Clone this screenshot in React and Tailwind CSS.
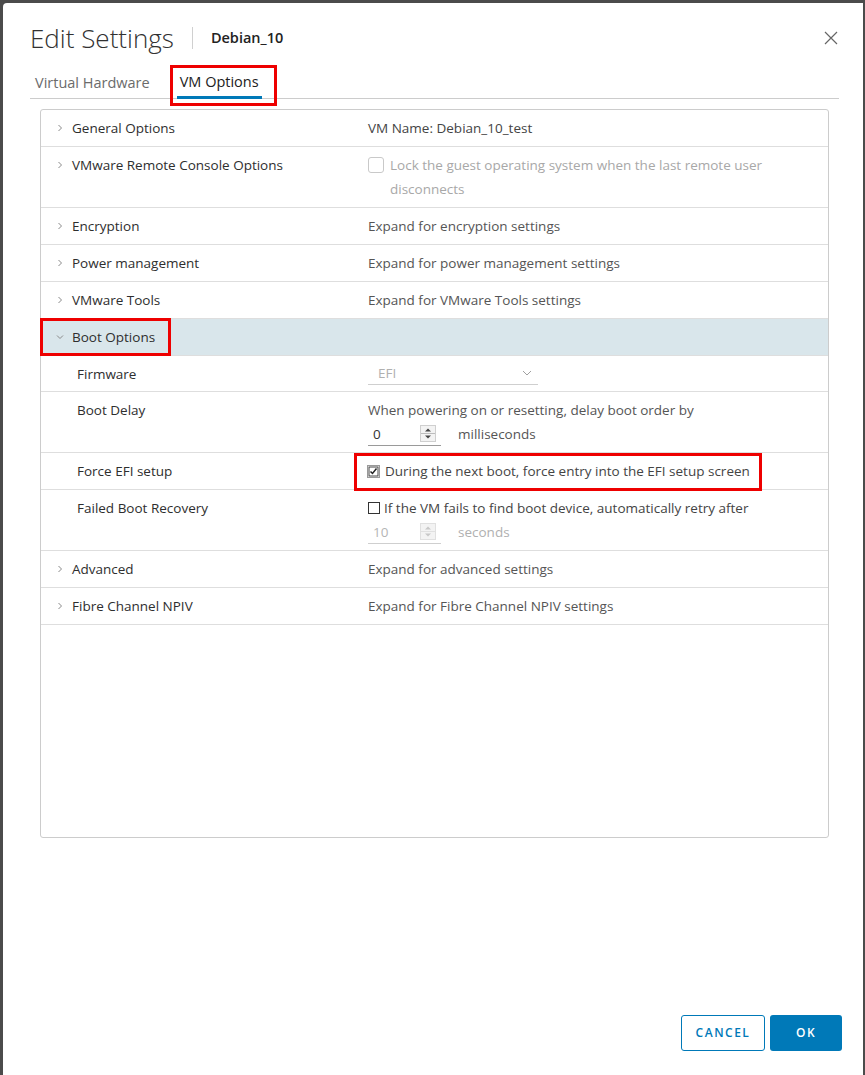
import React from 'react';

const font = { fontFamily: '"Open Sans", Lato, "Liberation Sans", sans-serif' };

function Chevron({ open }) {
  return (
    <svg width="8" height="8" viewBox="0 0 8 8" className="shrink-0">
      {open ? (
        <path d="M1 2.5 L4 5.5 L7 2.5" fill="none" stroke="#8a8a8a" strokeWidth="1" />
      ) : (
        <path d="M2.5 1 L5.5 4 L2.5 7" fill="none" stroke="#8a8a8a" strokeWidth="1" />
      )}
    </svg>
  );
}

function Spinner({ value, disabled }) {
  const c = disabled ? '#c8c8c8' : '#444';
  return (
    <div className={`flex items-center w-[73px] h-[24px] border-b ${disabled ? 'border-[#cfcfcf]' : 'border-[#9a9a9a]'}`}>
      <span className={`pl-[5px] flex-1 ${disabled ? 'text-[#b5b5b5]' : 'text-[#333]'}`}>{value}</span>
      <svg width="16" height="17" viewBox="0 0 16 17" className="mr-[5px]">
        <rect x="0.5" y="0.5" width="15" height="16" fill="#f3f3f3" stroke={disabled ? '#e0e0e0' : '#cfcfcf'} />
        <line x1="1" y1="8.5" x2="15" y2="8.5" stroke={disabled ? '#e0e0e0' : '#bcbcbc'} />
        <path d="M5 6.5 L8 3.5 L11 6.5 Z" fill={c} />
        <path d="M5 10.5 L8 13.5 L11 10.5 Z" fill={c} />
      </svg>
    </div>
  );
}

function Row({ label, chevron, open, sub, children, highlight, h, redLabel, redValue }) {
  return (
    <div className={`relative flex border-b border-[#dedede] ${highlight ? 'bg-[#d9e6eb]' : ''} ${h || ''}`}>
      <div className={`w-[327px] shrink-0 flex items-start py-[6px] leading-[24px] ${sub ? 'pl-[36px]' : 'pl-[15px]'}`}>
        {chevron && (
          <span className="h-[24px] flex items-center w-[16px]">
            <Chevron open={open} />
          </span>
        )}
        <span className="text-[#2e2e2e] font-medium">{label}</span>
      </div>
      <div className="relative flex-1 py-[6px] leading-[24px] text-[#555]">
        {children}
        {redValue && <span className="absolute left-[-14px] top-0 w-[408px] h-[38px] border-[3px] border-[#ee0000]" />}
      </div>
      {redLabel && <span className="absolute left-[-1px] top-[-1px] w-[131px] h-[38px] border-[3px] border-[#ee0000]" />}
    </div>
  );
}

export default function App() {
  return (
    <div className="w-[865px] h-[1075px] bg-[#4b4b4b] pl-[3px] pt-[3px] pr-[2px] overflow-hidden" style={font}>
      <div className="bg-white h-full rounded-tl-[4px] flex flex-col text-[13.5px]">
        <div className="flex items-center pl-[27px] pr-[25px] pt-[19px] h-[51px]">
          <h1 className="text-[26px] font-light text-[#313131] leading-[32px]">Edit Settings</h1>
          <span className="w-px h-[22px] bg-[#d0d0d0] ml-[18px] mr-[18px]" />
          <span className="text-[14.5px] font-semibold text-[#222]">Debian_10</span>
          <div className="flex-1" />
          <svg width="14" height="14" viewBox="0 0 14 14">
            <path d="M1 1 L13 13 M13 1 L1 13" stroke="#666" strokeWidth="1.2" />
          </svg>
        </div>

        <div className="ml-[27px] mr-[24px] mt-[15px] flex items-end border-b border-[#cccccc] h-[30px]">
          <div className="pl-[5px] pb-[4px] text-[14.5px] text-[#6b6b6b]">Virtual Hardware</div>
          <div className="relative ml-[27px] px-[3px] pb-[3px] text-[14.5px] text-[#222] border-b-[3px] border-[#0079b8] mb-[-1px]">
            VM Options
            <span className="absolute left-[-7px] top-[-6px] w-[107px] h-[41px] border-[3px] border-[#ee0000]" />
          </div>
        </div>

        <div className="ml-[37px] mr-[34px] mt-[10px] h-[729px] border border-[#cccccc] rounded-[3px]">
          <Row label="General Options" chevron>
            <span className="text-[#444]">VM Name: Debian_10_test</span>
          </Row>
          <Row label="VMware Remote Console Options" chevron>
            <div className="flex items-start">
              <span className="mt-[4px] w-[16px] h-[16px] border border-[#c9c9c9] rounded-[3px] shrink-0" />
              <span className="ml-[6px] text-[#a8a8a8] w-[400px]">Lock the guest operating system when the last remote user disconnects</span>
            </div>
          </Row>
          <Row label="Encryption" chevron>Expand for encryption settings</Row>
          <Row label="Power management" chevron>Expand for power management settings</Row>
          <Row label="VMware Tools" chevron>Expand for VMware Tools settings</Row>
          <Row label="Boot Options" chevron open highlight redLabel />
          <Row label="Firmware" sub h="h-[36px]">
            <div className="flex items-center w-[170px] h-[23px] border-b border-[#cfcfcf] pl-[10px] pr-[6px] text-[#b0b0b0]">
              <span className="flex-1">EFI</span>
              <svg width="10" height="6" viewBox="0 0 10 6">
                <path d="M1 1 L5 5 L9 1" fill="none" stroke="#a0a0a0" strokeWidth="1" />
              </svg>
            </div>
          </Row>
          <Row label="Boot Delay" sub>
            <div>When powering on or resetting, delay boot order by</div>
            <div className="flex items-center">
              <Spinner value="0" />
              <span className="ml-[17px]">milliseconds</span>
            </div>
          </Row>
          <Row label="Force EFI setup" sub redValue>
            <div className="flex items-center">
              <svg width="13" height="13" viewBox="0 0 13 13" className="shrink-0 ml-[-1px]">
                <rect x="0.5" y="0.5" width="12" height="12" fill="#fff" stroke="#333" strokeDasharray="1 1" />
                <rect x="2" y="2" width="9" height="9" fill="#fff" stroke="#444" />
                <path d="M3.5 6.5 L5.5 8.5 L9.5 3.5" fill="none" stroke="#222" strokeWidth="1.5" />
              </svg>
              <span className="ml-[5px] text-[#444]">During the next boot, force entry into the EFI setup screen</span>
            </div>
          </Row>
          <Row label="Failed Boot Recovery" sub>
            <div className="flex items-center">
              <span className="w-[12px] h-[12px] border border-[#333] shrink-0" />
              <span className="ml-[4px] text-[#444]">If the VM fails to find boot device, automatically retry after</span>
            </div>
            <div className="flex items-center">
              <Spinner value="10" disabled />
              <span className="ml-[17px] text-[#b0b0b0]">seconds</span>
            </div>
          </Row>
          <Row label="Advanced" chevron>Expand for advanced settings</Row>
          <Row label="Fibre Channel NPIV" chevron>Expand for Fibre Channel NPIV settings</Row>
        </div>

        <div className="flex-1" />
        <div className="flex justify-end gap-[5px] mr-[21px] mb-[24px]">
          <button className="w-[84px] h-[36px] border border-[#0079b8] rounded-[3px] text-[#0079b8] text-[12px] font-semibold tracking-[1.5px]">
            CANCEL
          </button>
          <button className="w-[72px] h-[36px] bg-[#0079b8] rounded-[3px] text-white text-[12px] font-semibold tracking-[1.5px]">
            OK
          </button>
        </div>
      </div>
    </div>
  );
}
